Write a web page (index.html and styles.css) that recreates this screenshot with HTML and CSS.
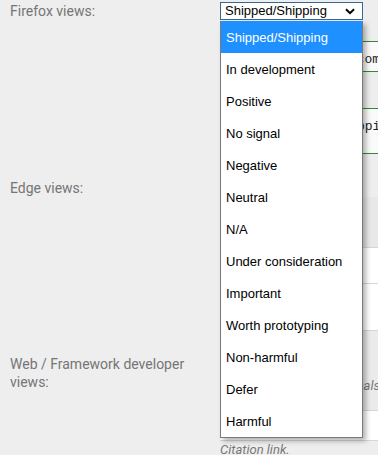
FILE: index.html
```html
<!DOCTYPE html>
<html lang="en">
<head>
    <meta charset="UTF-8">
    <meta name="viewport" content="width=device-width, initial-scale=1.0">
    <title>Views</title>
    <link rel="stylesheet" href="styles.css">
</head>
<body>
    <div class="form">
        <div class="row row-firefox">
            <label class="label">Firefox views:</label>
            <div class="field">
                <div class="select-wrap">
                    <div class="select">
                        <span>Shipped/Shipping</span>
                        <svg class="chevron" width="10" height="7" viewBox="0 0 10 7"><path d="M1 1.2 L5 5.2 L9 1.2" fill="none" stroke="#000" stroke-width="2"/></svg>
                    </div>
                    <ul class="dropdown">
                        <li class="selected">Shipped/Shipping</li>
                        <li>In development</li>
                        <li>Positive</li>
                        <li>No signal</li>
                        <li>Negative</li>
                        <li>Neutral</li>
                        <li>N/A</li>
                        <li>Under consideration</li>
                        <li>Important</li>
                        <li>Worth prototyping</li>
                        <li>Non-harmful</li>
                        <li>Defer</li>
                        <li>Harmful</li>
                    </ul>
                </div>
                <div class="box green short"><span class="mono">example.com</span></div>
                <div class="box green tall"><span class="mono tail">Shipping</span></div>
            </div>
        </div>
        <div class="row row-edge">
            <label class="label">Edge views:</label>
            <div class="field">
                <div class="select plain"><span>No signal</span></div>
                <div class="box grey-top"></div>
                <div class="box white mid"></div>
                <div class="box white low"></div>
            </div>
        </div>
        <div class="row row-web">
            <label class="label">Web / Framework developer views:</label>
            <div class="field">
                <div class="hint-area"><span class="hint hint-tail">proposals</span></div>
                <div class="box white link"></div>
                <p class="hint citation">Citation link.</p>
            </div>
        </div>
    </div>
</body>
</html>
```

FILE: styles.css
```css
html, body {
    overflow: hidden;
}
body {
    margin: 0;
    background: #eeeeee;
    font-family: Roboto, "Liberation Sans", sans-serif;
}
.form {
    padding-left: 10px;
}
.row {
    display: grid;
    grid-template-columns: 210px 160px;
}
.label {
    font-size: 14px;
    line-height: 18px;
    color: #757575;
    padding-right: 20px;
}
.row-firefox .label {
    padding-top: 2px;
}
.row-edge .label {
    padding-top: 3px;
}
.row-web .label {
    padding-top: 24px;
}
.field {
    font-family: "Liberation Sans", Arial, sans-serif;
}
.select-wrap {
    position: relative;
    margin-top: 2px;
}
.select {
    box-sizing: border-box;
    width: 143px;
    height: 18px;
    border: 1px solid #3a6796;
    background: #fff;
    font-size: 13px;
    line-height: 16px;
    padding-left: 4px;
    display: flex;
    align-items: center;
    justify-content: space-between;
    padding-right: 7px;
}
.select.plain {
    border-color: #999;
    margin-top: 3px;
}
.chevron {
    display: block;
}
.dropdown {
    position: absolute;
    top: 19px;
    left: 0;
    z-index: 10;
    box-sizing: border-box;
    width: 143px;
    margin: 0;
    padding: 0;
    list-style: none;
    background: #fff;
    border: 1px solid #7a7a7a;
    border-top: none;
    box-shadow: 3px 3px 5px rgba(0, 0, 0, 0.3);
}
.dropdown li {
    box-sizing: border-box;
    height: 32px;
    line-height: 32px;
    padding-top: 1px;
    font-size: 13px;
    color: #000;
    padding-left: 5px;
    white-space: nowrap;
}
.dropdown li.selected {
    background: #1e90ff;
    color: #fff;
}
.box {
    box-sizing: border-box;
    background: #fafafa;
    white-space: nowrap;
    overflow: hidden;
    text-align: right;
}
.green {
    border-top: 1px solid #2e8b2e;
    border-bottom: 1px solid #2e8b2e;
}
.short {
    height: 31px;
    margin-top: 21px;
    padding-top: 7px;
}
.tall {
    height: 46px;
    margin-top: 36px;
    margin-bottom: 22px;
    padding-top: 7px;
}
.mono {
    font-family: "Liberation Mono", monospace;
    font-size: 13px;
    color: #222;
}
.tail {
    margin-right: -16px;
}
.grey-top {
    height: 51px;
    background: #e8e8e8;
    border-bottom: 1px solid #d6d6d6;
}
.white {
    background: #fff;
    border-bottom: 1px solid #d6d6d6;
}
.mid {
    height: 36px;
}
.low {
    height: 47px;
}
.hint-area {
    height: 80px;
    border-bottom: 1px solid #d6d6d6;
    background: #ebebeb;
    white-space: nowrap;
    overflow: hidden;
    padding-top: 45px;
    box-sizing: border-box;
    text-align: right;
}
.hint {
    font-family: Roboto, "Liberation Sans", sans-serif;
    font-style: italic;
    font-size: 13px;
    color: #777;
}
.hint-tail {
    display: inline-block;
    margin-right: 0;
}
.link {
    height: 30px;
}
.citation {
    margin: 1px 0 0;
    line-height: 16px;
}
```
